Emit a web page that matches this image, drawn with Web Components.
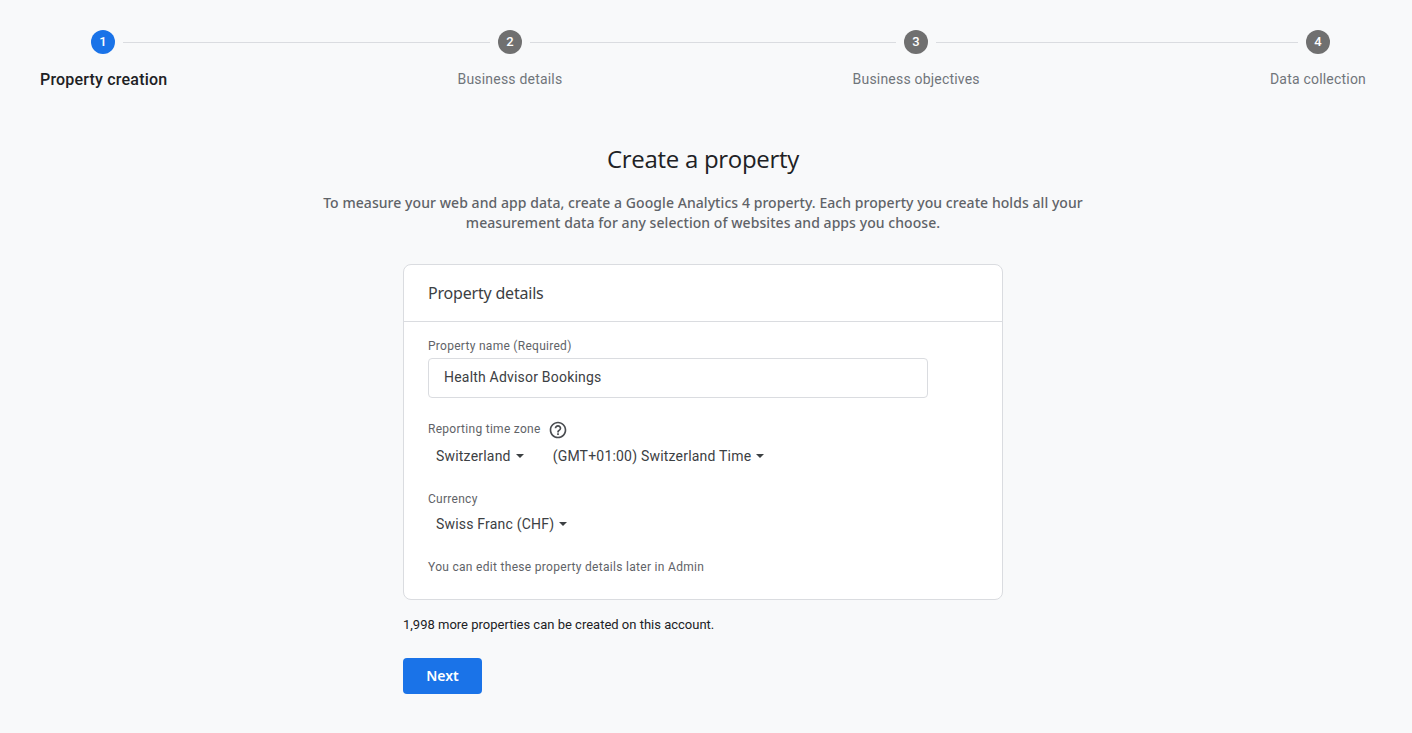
<!DOCTYPE html>
<html>
<head>
<meta charset="utf-8">
<title>Create a property</title>
<style>
  html, body { margin: 0; height: 100%; background: #f8f9fa; }
  body { font-family: Roboto, "Liberation Sans", sans-serif; overflow: hidden; }
</style>
</head>
<body>
<ga-page>
  <ga-stepper></ga-stepper>
  <ga-intro heading="Create a property">
    To measure your web and app data, create a Google Analytics 4 property. Each property you create holds all your<br>
    measurement data for any selection of websites and apps you choose.
  </ga-intro>
  <ga-card heading="Property details">
    <ga-field label="Property name (Required)" gap="3" style="margin-top:1px">
      <ga-input value="Health Advisor Bookings"></ga-input>
    </ga-field>
    <ga-field label="Reporting time zone" help gap="-2" style="margin-top:20px">
      <ga-select style="margin-right:13px">Switzerland</ga-select>
      <ga-select>(GMT+01:00) Switzerland Time</ga-select>
    </ga-field>
    <ga-field label="Currency" gap="-2" style="margin-top:16px">
      <ga-select>Swiss Franc (CHF)</ga-select>
    </ga-field>
    <ga-note>You can edit these property details later in Admin</ga-note>
  </ga-card>
  <ga-footer>1,998 more properties can be created on this account.</ga-footer>
  <ga-button>Next</ga-button>
</ga-page>

<script>
class GaPage extends HTMLElement {
  constructor() {
    super();
    // the content column is centred on 703, a scrollbar gutter in the original
    this.attachShadow({ mode: 'open' }).innerHTML = `
      <style>
        :host { display: flex; flex-direction: column; align-items: center; padding-right: 6px; }
      </style>
      <slot></slot>`;
  }
}

const STEPS = [
  { name: 'Property creation', line: 367 },
  { name: 'Business details', line: 366 },
  { name: 'Business objectives', line: 362 },
  { name: 'Data collection' }
];

class GaStepper extends HTMLElement {
  constructor() {
    super();
    const dots = STEPS.map((s, i) => `
      <span class="dot ${i === 0 ? 'on' : ''}">${i + 1}</span>
      ${s.line ? `<span class="line" style="width:${s.line}px"></span>` : ''}`).join('');
    const labels = STEPS.map((s, i) => `<span class="label ${i === 0 ? 'on' : ''}">${s.name}</span>`).join('');
    this.attachShadow({ mode: 'open' }).innerHTML = `
      <style>
        :host { display: block; align-self: stretch; margin-right: -6px; padding-top: 30px; }
        .dots { display: flex; align-items: center; padding-left: 91px; }
        .dot {
          width: 24px; height: 24px; border-radius: 50%; flex: none;
          background: #707070; color: #fff;
          font: 500 13px/24px Roboto, sans-serif; text-align: center;
        }
        .dot.on { background: #1a73e8; }
        .line { height: 1px; background: #dadce0; margin: 0 8px; flex: none; }
        .labels {
          display: flex; justify-content: space-between;
          padding: 15px 46px 0 40px;
        }
        .label { font: 400 14px/20px Roboto, sans-serif; color: #70757a; letter-spacing: .2px; }
        .label.on { font-size: 16px; line-height: 22px; font-weight: 500; color: #202124; letter-spacing: .2px; }
      </style>
      <div class="dots">${dots}</div>
      <div class="labels">${labels}</div>`;
  }
}

class GaIntro extends HTMLElement {
  constructor() {
    super();
    this.attachShadow({ mode: 'open' }).innerHTML = `
      <style>
        :host { display: block; text-align: center; padding-top: 52px; }
        h1 { margin: 0; font: 400 24px/32px "Open Sans", sans-serif; color: #202124; letter-spacing: -.3px; }
        p { margin: 18px 0 0; font: 500 14px/20px "Noto Sans", sans-serif; color: #5f6368; letter-spacing: .06px; }
      </style>
      <h1>${this.getAttribute('heading')}</h1>
      <p><slot></slot></p>`;
  }
}

class GaCard extends HTMLElement {
  constructor() {
    super();
    this.attachShadow({ mode: 'open' }).innerHTML = `
      <style>
        :host {
          display: block; box-sizing: border-box; width: 600px; margin-top: 31px;
          background: #fff; border: 1px solid #dadce0; border-radius: 8px;
        }
        header {
          height: 57px; box-sizing: border-box; padding: 0 24px;
          border-bottom: 1px solid #dadce0;
          font: 400 16px/56px "Noto Sans", sans-serif; color: #3c4043; letter-spacing: -.2px;
        }
        .body { padding: 14px 24px 23px; }
      </style>
      <header>${this.getAttribute('heading')}</header>
      <div class="body"><slot></slot></div>`;
  }
}

class GaField extends HTMLElement {
  constructor() {
    super();
    const help = this.hasAttribute('help') ? `
      <svg width="20" height="20" viewBox="0 0 24 24" fill="#494c50" style="margin-top:2px"><path d="M11 18h2v-2h-2v2zm1-16C6.48 2 2 6.48 2 12s4.48 10 10 10 10-4.48 10-10S17.52 2 12 2zm0 18c-4.41 0-8-3.59-8-8s3.59-8 8-8 8 3.59 8 8-3.59 8-8 8zm0-14c-2.21 0-4 1.79-4 4h2c0-1.1.9-2 2-2s2 .9 2 2c0 2-3 1.75-3 5h2c0-2.25 3-2.5 3-5 0-2.21-1.79-4-4-4z"/></svg>` : '';
    this.attachShadow({ mode: 'open' }).innerHTML = `
      <style>
        :host { display: block; }
        .top { display: flex; align-items: center; gap: 7px; min-height: 18px; font: 400 12px/18px Roboto, sans-serif; color: #5f6368; letter-spacing: .28px; }
        .row { display: flex; align-items: center; margin-top: ${this.getAttribute('gap') || 0}px; }
      </style>
      <div class="top"><span>${this.getAttribute('label')}</span>${help}</div>
      <div class="row"><slot></slot></div>`;
  }
}

class GaInput extends HTMLElement {
  constructor() {
    super();
    this.attachShadow({ mode: 'open' }).innerHTML = `
      <style>
        :host {
          display: block; box-sizing: border-box; width: 500px; height: 40px; padding: 0 15px;
          background: #fff; border: 1px solid #dadce0; border-radius: 4px;
          font: 400 14px/36px Roboto, sans-serif; color: #3c4043; letter-spacing: .2px;
        }
      </style>
      ${this.getAttribute('value')}`;
  }
}

class GaSelect extends HTMLElement {
  constructor() {
    super();
    this.attachShadow({ mode: 'open' }).innerHTML = `
      <style>
        :host {
          display: inline-flex; align-items: center; height: 36px; padding: 0 8px;
          font: 400 14px/20px Roboto, sans-serif; color: #3c4043; letter-spacing: .2px;
        }
        .caret { width: 0; height: 0; margin-left: 5px; border: 4.5px solid transparent; border-top-color: #3c4043; border-bottom: 0; }
      </style>
      <slot></slot><span class="caret"></span>`;
  }
}

class GaNote extends HTMLElement {
  constructor() {
    super();
    this.attachShadow({ mode: 'open' }).innerHTML = `
      <style>
        :host { display: block; margin-top: 16px; font: 400 12px/18px Roboto, sans-serif; color: #5f6368; letter-spacing: .3px; }
      </style>
      <slot></slot>`;
  }
}

class GaFooter extends HTMLElement {
  constructor() {
    super();
    this.attachShadow({ mode: 'open' }).innerHTML = `
      <style>
        :host { display: block; width: 600px; margin-top: 15px; font: 400 13px/20px Roboto, sans-serif; color: #202124; }
      </style>
      <slot></slot>`;
  }
}

class GaButton extends HTMLElement {
  constructor() {
    super();
    this.attachShadow({ mode: 'open' }).innerHTML = `
      <style>
        :host { display: block; width: 600px; margin-top: 23px; }
        button {
          display: block; width: 79px; height: 36px; padding: 0; border: 0; border-radius: 4px;
          background: #1a73e8; color: #fff; font: 600 14px/36px "Noto Sans", sans-serif;
        }
      </style>
      <button><slot></slot></button>`;
  }
}

customElements.define('ga-page', GaPage);
customElements.define('ga-stepper', GaStepper);
customElements.define('ga-intro', GaIntro);
customElements.define('ga-card', GaCard);
customElements.define('ga-field', GaField);
customElements.define('ga-input', GaInput);
customElements.define('ga-select', GaSelect);
customElements.define('ga-note', GaNote);
customElements.define('ga-footer', GaFooter);
customElements.define('ga-button', GaButton);
</script>
</body>
</html>
